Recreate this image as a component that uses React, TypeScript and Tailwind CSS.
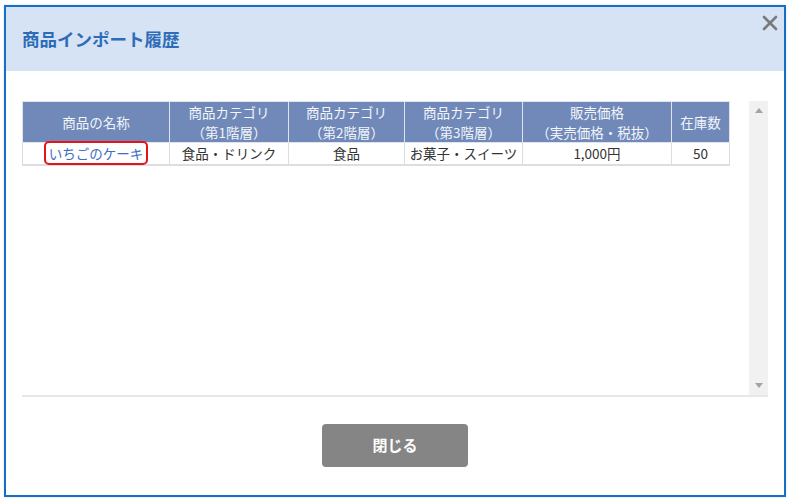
import { X } from "lucide-react";

const columns = [
  { w: "w-[147px]", lines: ["商品の名称"] },
  { w: "w-[119px]", lines: ["商品カテゴリ", "（第1階層）"] },
  { w: "w-[116px]", lines: ["商品カテゴリ", "（第2階層）"] },
  { w: "w-[118px]", lines: ["商品カテゴリ", "（第3階層）"] },
  { w: "w-[149px]", lines: ["販売価格", "（実売価格・税抜）"] },
  { w: "w-[58px]", lines: ["在庫数"] },
];

const rows = [
  {
    name: "いちごのケーキ",
    cat1: "食品・ドリンク",
    cat2: "食品",
    cat3: "お菓子・スイーツ",
    price: "1,000円",
    stock: "50",
  },
];

export default function App() {
  return (
    <div
      className="min-h-screen bg-white pt-[5px] pl-[4px]"
      style={{ fontFamily: '"Noto Sans CJK JP", "Noto Sans", sans-serif' }}
    >
      <div className="w-[782px] h-[492px] border-2 border-[#1470c6] bg-white flex flex-col shadow-[0_0_2px_rgba(0,0,0,0.15)]">
        {/* header */}
        <div className="relative h-[64px] shrink-0 bg-[#d5e3f5] flex items-center px-[16px]">
          <h1 className="text-[17.5px] font-bold text-[#2d6cb8] leading-none">
            商品インポート履歴
          </h1>
          <button className="absolute right-[2px] top-[4px] text-[#7a7a7a]">
            <X size={24} strokeWidth={2.6} />
          </button>
        </div>

        {/* body */}
        <div className="px-[16px] pt-[30px]">
          <div className="h-[294px] flex border-b-2 border-[#e6e7ea] box-content">
            <div className="flex-1">
              <table className="table-fixed border-collapse w-[707px] text-[13.5px] leading-[20px]">
                <thead>
                  <tr className="bg-[#7089b9] text-[#f2f5fa]">
                    {columns.map((c, i) => (
                      <th
                        key={i}
                        className={`${c.w} h-[41px] font-normal text-center border border-[#dfe4ee] p-0`}
                      >
                        {c.lines.map((l, j) => (
                          <div key={j} className="whitespace-nowrap">
                            {l}
                          </div>
                        ))}
                      </th>
                    ))}
                  </tr>
                </thead>
                <tbody>
                  {rows.map((r, i) => (
                    <tr key={i} className="text-[#333] h-[22px]">
                      <td className="text-center border border-[#dddddd] border-b-2 p-0">
                        <span className="relative inline-block text-[#3b6fc4]">
                          {r.name}
                          <span className="absolute -left-[5px] -right-[5px] -top-[2px] -bottom-[2px] border-[2.5px] border-[#e8121c] rounded-[5px]" />
                        </span>
                      </td>
                      <td className="text-center border border-[#dddddd] border-b-2 p-0">
                        {r.cat1}
                      </td>
                      <td className="text-center border border-[#dddddd] border-b-2 p-0">
                        {r.cat2}
                      </td>
                      <td className="text-center border border-[#dddddd] border-b-2 p-0 whitespace-nowrap">
                        {r.cat3}
                      </td>
                      <td className="text-center border border-[#dddddd] border-b-2 p-0">
                        {r.price}
                      </td>
                      <td className="text-center border border-[#dddddd] border-b-2 p-0">
                        {r.stock}
                      </td>
                    </tr>
                  ))}
                </tbody>
              </table>
            </div>

            {/* scrollbar */}
            <div className="w-[19px] bg-[#f1f1f1] flex flex-col items-center justify-between py-[7px]">
              <svg width="8" height="5" viewBox="0 0 8 5">
                <path d="M0 5 L4 0 L8 5 Z" fill="#a3a3a3" />
              </svg>
              <svg width="8" height="5" viewBox="0 0 8 5">
                <path d="M0 0 L8 0 L4 5 Z" fill="#a3a3a3" />
              </svg>
            </div>
          </div>

          <div className="flex justify-center pt-[27px]">
            <button className="w-[146px] h-[43px] rounded-[4px] bg-[#858585] text-white font-bold text-[15px]">
              閉じる
            </button>
          </div>
        </div>
      </div>
    </div>
  );
}
